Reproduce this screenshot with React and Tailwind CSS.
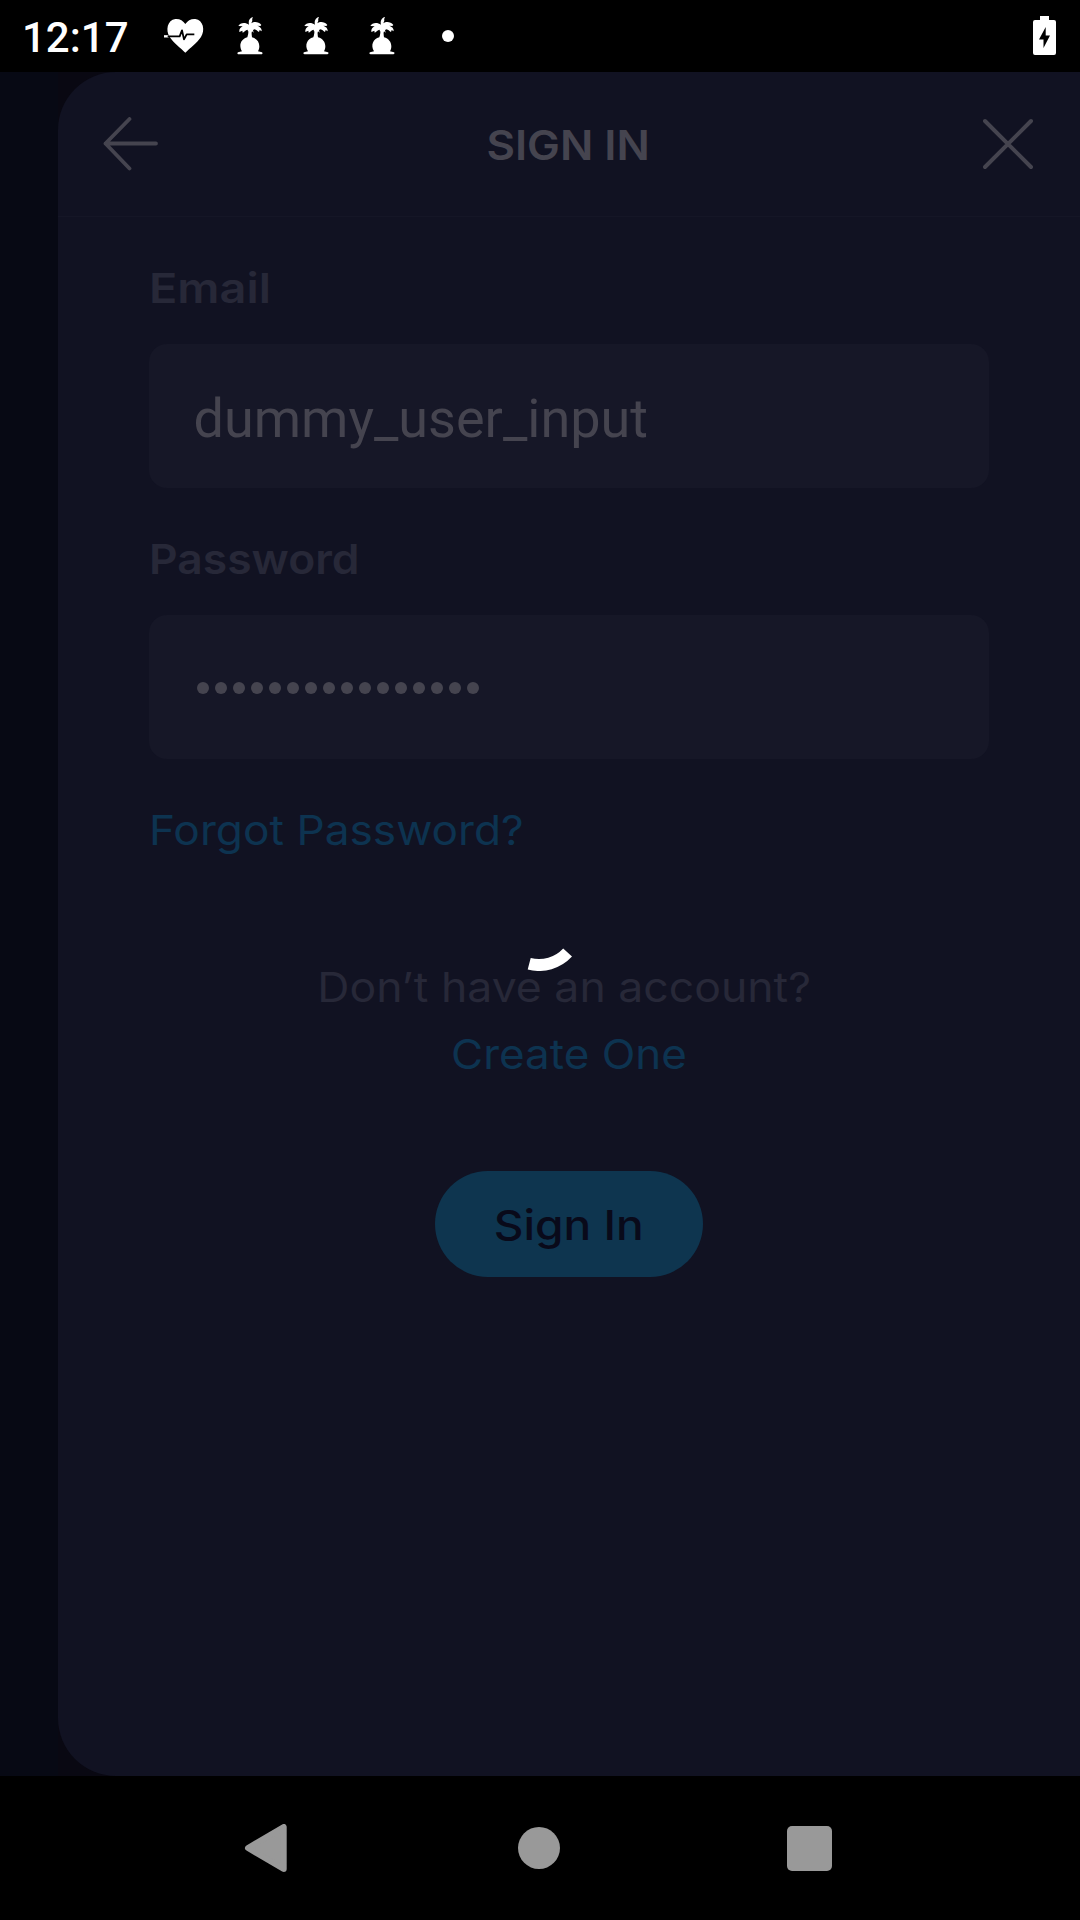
const inter = "font-['Inter',sans-serif] text-[41px] leading-[50px] whitespace-nowrap";

function HeartPulse() {
  return (
    <svg className="h-[46px] w-[48px] shrink-0" viewBox="0 0 144 138">
      <path
        fill="#fff"
        d="M76 122C62 108 40 92 29 75 16 55 22 24 46 21c13-1 23 5 30 15 7-10 17-16 30-15 24 3 30 34 17 54-11 17-33 33-47 47Z"
      />
      <path d="M12 73h14" stroke="#fff" strokeWidth="7" />
      <path d="M23 73h36l7-18 6 27 8-15h23" fill="none" stroke="#000" strokeWidth="5.500" strokeLinejoin="round" />
    </svg>
  );
}

function PalmTree() {
  return (
    <svg className="h-[46px] w-[30px] shrink-0" viewBox="224 0 90 138">
      <path
        fill="#fff"
        d="M266 38C263 27 268 17 278 15c-2 4-3 7-2 11l-3 8c8-6 22-5 30 5l-3 3-9-1c8 3 14 8 13 17l-6-4-2 6c-5-3-9-7-13-8l-5 2 2 8-5-4-2 4-4-8-6 5-1-6c-7 1-9 6-15 9l-1-6-9 4c-1-8 3-13 10-17l-13-1c5-10 20-13 32-4Z"
      />
      <path
        fill="#fff"
        d="M264 50h10c-1 9 0 19 1 26 14 4 22 14 22 27 0 5-1 10-4 15l12 3c3 2 1 6-2 6h-68c-4 0-5-4-2-6l12-3c-11-18-3-37 16-42 3-8 4-18 3-26Z"
      />
    </svg>
  );
}

function StatusBar() {
  return (
    <div className="flex h-[72px] items-start bg-black pl-[22px] text-white">
      <div className="mt-[11px] w-[138px] font-['Roboto',sans-serif] text-[42px] leading-[54px] font-medium">12:17</div>
      <div className="mt-3 flex w-[386px] items-start">
        <HeartPulse />
        <div className="ml-[27px] flex gap-9">
          <PalmTree />
          <PalmTree />
          <PalmTree />
        </div>
        <div className="mt-[18px] ml-[45px] size-3 rounded-full bg-white" />
      </div>
      <svg className="mt-4 mr-6 ml-auto h-[39px] w-6" viewBox="0 0 24 39">
        <path fill="#fff" d="M8 0h9v4h5q2 0 2 2v31q0 2-2 2H3q-2 0-2-2V6q0-2 2-2h5Z" />
        <path fill="#000" d="M13.700 11 7 23.500h4.500V32L18 19.500h-4.300Z" />
      </svg>
    </div>
  );
}

function Header() {
  return (
    <div className="flex h-[145px] items-center justify-between border-b border-[#151626] pr-[47px] pl-11">
      <svg className="h-[54px] w-[58px]" viewBox="0 0 58 54" fill="none" stroke="#45444f" strokeWidth="3.8" strokeLinecap="round" strokeLinejoin="round">
        <path d="M27.500 2 3.500 26.500l24 25M3.500 26.500H54" />
      </svg>
      <div className={`${inter} origin-center scale-x-[1.07] pt-[2px] pr-[6px] font-semibold text-[#45444f]`}>SIGN IN</div>
      <svg className="h-[54px] w-[50px]" viewBox="0 0 50 54" fill="none" stroke="#45444f" strokeWidth="4" strokeLinecap="round">
        <path d="m2 4 46 46M48 4 2 50" />
      </svg>
    </div>
  );
}

function Spinner() {
  return (
    <svg className="absolute top-[881px] left-[494px] size-[90px]" viewBox="-45 -45 90 90">
      <path fill="none" stroke="#fff" strokeWidth="12" d="M-9.800 37.750A39 39 0 0 0 28.600 26.500" />
    </svg>
  );
}

export default function App() {
  return (
    <div className="relative flex h-[1920px] w-[1080px] flex-col overflow-hidden bg-black">
      <StatusBar />
      <div className="flex h-[1704px] bg-[#070914] pl-[58px]">
        <div className="flex flex-1 bg-[#090812]">
          <main className="flex flex-1 flex-col rounded-l-[58px] bg-[#111222]">
            <Header />
            <div className="flex flex-col px-[91px] pt-[46px]">
              <label className={`${inter} origin-left scale-x-[1.143] font-semibold text-[#272838]`}>Email</label>
              <div className="mt-[31px] flex h-36 items-center rounded-[18px] bg-[#161727] pt-[6px] pl-[44.500px] font-['Roboto',sans-serif] text-[54px] leading-[64px] text-[#45444f]">
                dummy_user_input
              </div>
              <label className={`${inter} mt-[46px] origin-left scale-x-[1.083] font-semibold text-[#272838]`}>Password</label>
              <div className="mt-[31px] flex h-36 items-center gap-[6px] rounded-[18px] bg-[#161727] pt-[2px] pl-12">
                {Array.from({ length: 16 }, (_, i) => (
                  <span key={i} className="size-3 shrink-0 rounded-full bg-[#45444f]" />
                ))}
              </div>
              <a className={`${inter} mt-[46px] origin-left scale-x-[1.079] font-normal text-[#0d3350]`}>Forgot Password?</a>
            </div>
            <div className="mt-[107px] flex flex-col items-center">
              <div className={`${inter} mr-[10px] scale-x-[1.087] font-normal text-[#272838]`}>Don’t have an account?</div>
              <a className={`${inter} mt-[17px] scale-x-[1.072] font-normal text-[#0d3350]`}>Create One</a>
              <button className="mt-[92px] flex h-[106px] w-[268px] justify-center rounded-full bg-[#0e354f] pt-[29px]">
                <span className={`${inter} scale-x-[1.123] pr-px font-medium text-[#090a1a]`}>Sign In</span>
              </button>
            </div>
          </main>
        </div>
      </div>
      <nav className="flex h-[144px] items-center bg-black pl-[244px]">
        <svg className="h-12 w-[43px]" viewBox="0 0 43 48">
          <path fill="#999" stroke="#999" strokeWidth="6" strokeLinejoin="round" d="M4 24 39.700 3v42Z" />
        </svg>
        <div className="ml-[231px] size-[42px] rounded-full bg-[#999]" />
        <div className="ml-[227px] size-[45px] rounded-[5px] bg-[#999]" />
      </nav>
      <Spinner />
    </div>
  );
}
